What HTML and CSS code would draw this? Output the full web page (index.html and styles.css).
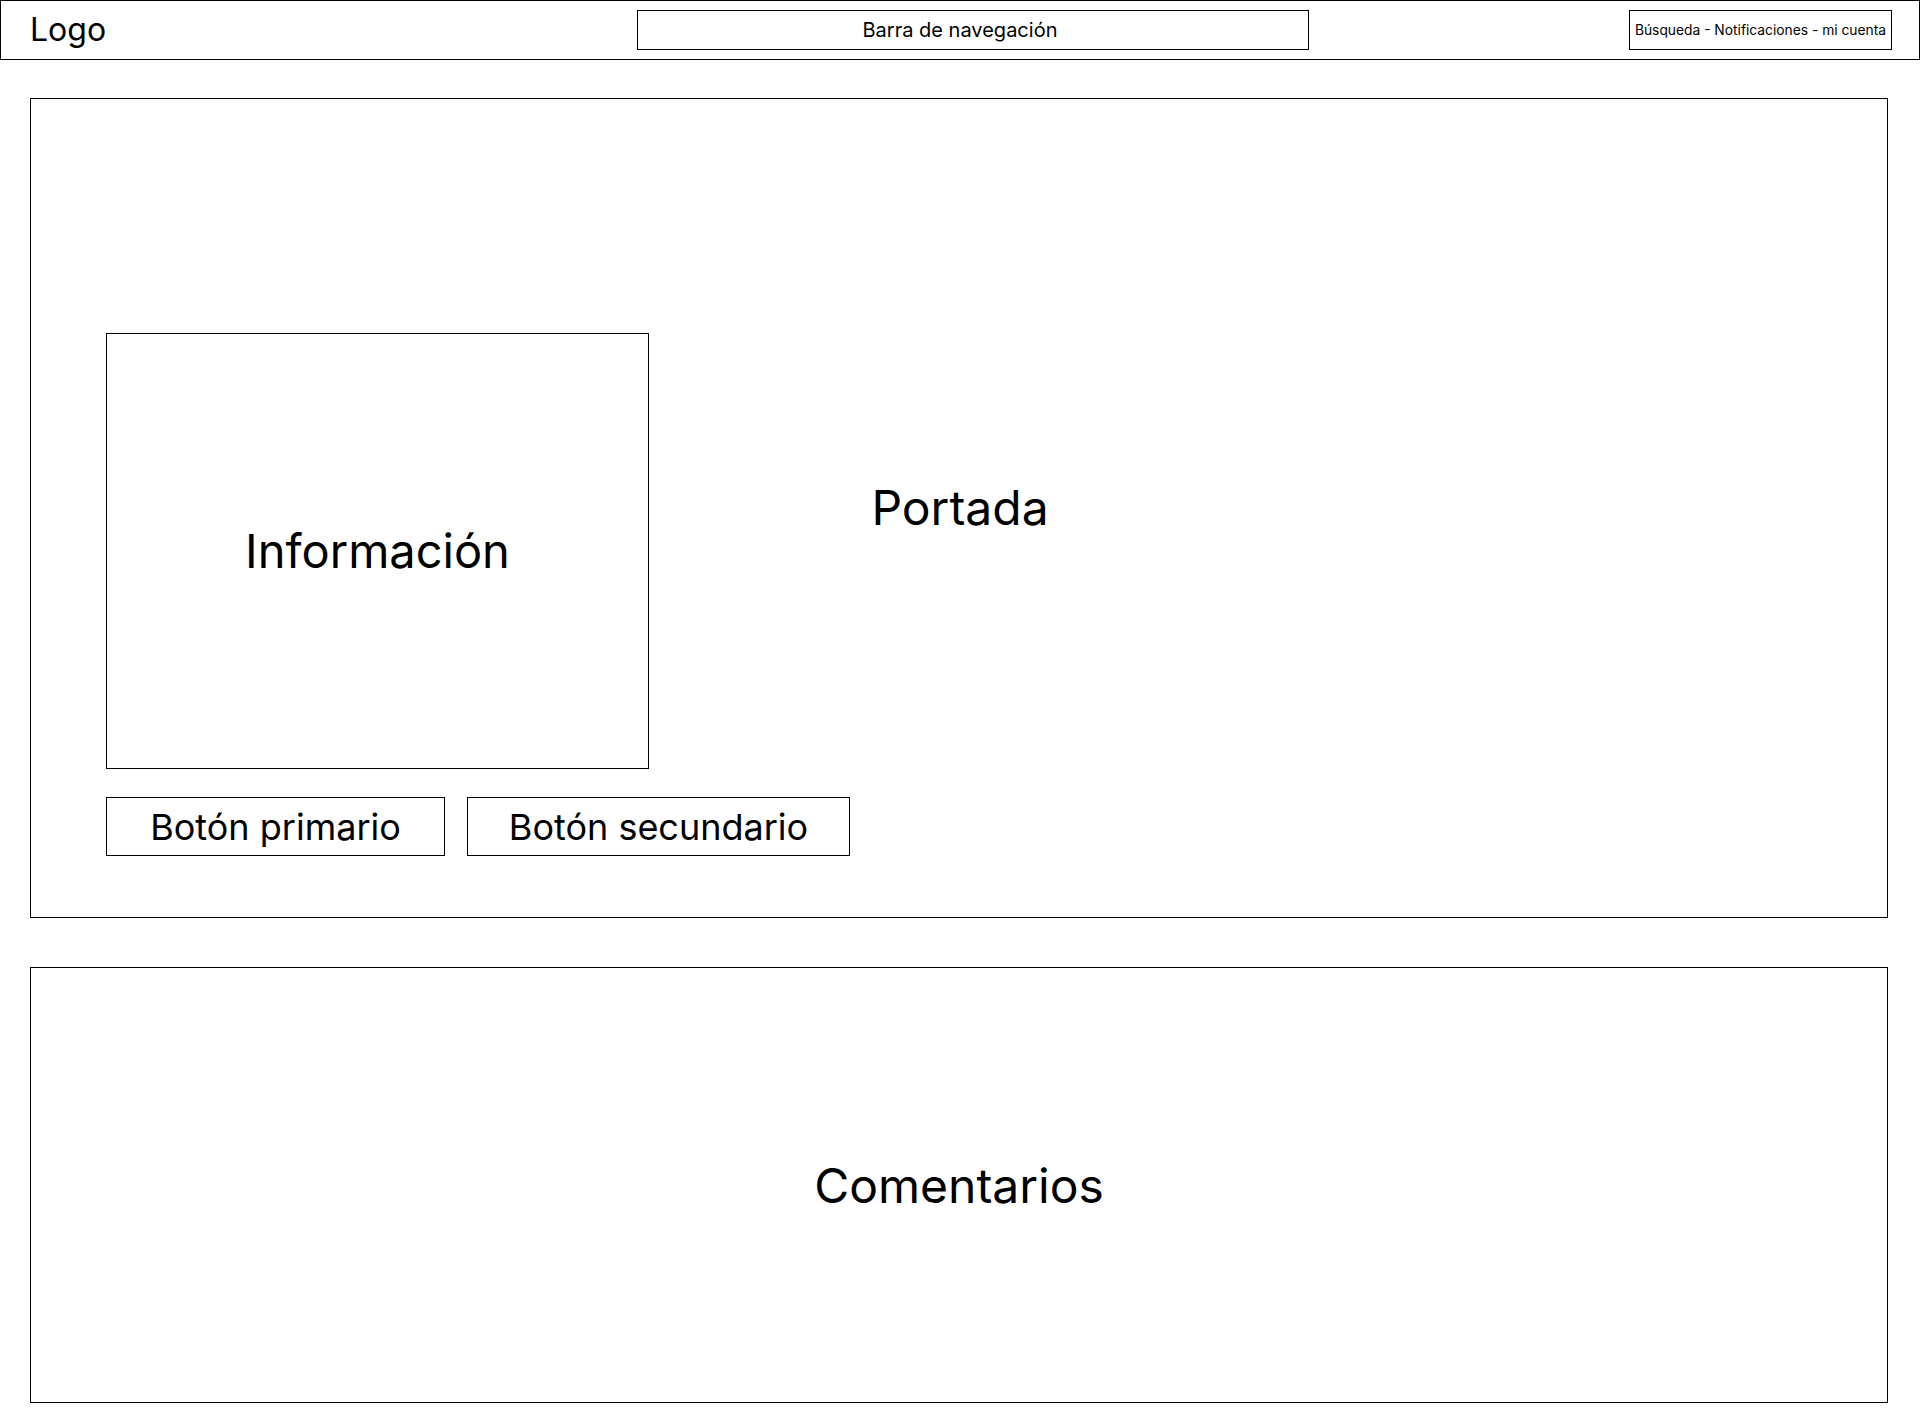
FILE: index.html
```html
<!DOCTYPE html>
<html lang="es">
<head>
<meta charset="utf-8">
<title>Wireframe</title>
<link rel="stylesheet" href="styles.css">
</head>
<body>
<header class="topbar">
  <div class="logo">Logo</div>
  <nav class="navbar"><span class="navbar-label">Barra de navegación</span></nav>
  <div class="user-tools">Búsqueda - Notificaciones - mi cuenta</div>
</header>
<main class="page">
  <section class="hero">
    <div class="hero-label">Portada</div>
    <div class="hero-content">
      <div class="info-box">Información</div>
      <div class="actions">
        <div class="btn btn-primary">Botón primario</div>
        <div class="btn btn-secondary">Botón secundario</div>
      </div>
    </div>
  </section>
  <section class="comments">Comentarios</section>
</main>
</body>
</html>
```

FILE: styles.css
```css
* {
  box-sizing: border-box;
}

html, body {
  margin: 0;
  padding: 0;
  background: #ffffff;
}

body {
  width: 1920px;
  font-family: Inter, "Noto Sans", "Liberation Sans", sans-serif;
  color: #000000;
}

.topbar {
  display: flex;
  align-items: center;
  height: 60px;
  border: 1px solid #000;
  padding: 0 27px 0 28px;
}

.logo {
  flex: 0 0 608px;
  font-size: 32px;
  line-height: 1;
  padding-left: 1px;
}

.navbar {
  flex: 0 0 672px;
  height: 40px;
  border: 1px solid #000;
  display: flex;
  align-items: center;
  justify-content: center;
  padding-right: 26px;
  font-size: 20px;
}

.user-tools {
  margin-left: auto;
  flex: 0 0 263px;
  height: 40px;
  border: 1px solid #000;
  display: flex;
  align-items: center;
  justify-content: center;
  font-size: 13.8px;
  white-space: nowrap;
}

.page {
  padding: 38px 32px 0 30px;
  display: flex;
  flex-direction: column;
  gap: 49px;
}

.hero {
  display: grid;
  width: 1858px;
  height: 820px;
  border: 1px solid #000;
}

.hero-label {
  grid-area: 1 / 1;
  place-self: center;
  font-size: 48px;
  line-height: 1;
  padding-left: 2px;
}

.hero-content {
  grid-area: 1 / 1;
  padding: 234px 0 0 75px;
  display: flex;
  flex-direction: column;
  align-items: flex-start;
  gap: 28px;
}

.info-box {
  width: 543px;
  height: 436px;
  border: 1px solid #000;
  display: flex;
  align-items: center;
  justify-content: center;
  font-size: 47px;
  padding-bottom: 2px;
}

.actions {
  display: flex;
  gap: 22px;
}

.btn {
  height: 59px;
  border: 1px solid #000;
  display: flex;
  align-items: center;
  justify-content: center;
  font-size: 36px;
}

.btn-primary {
  width: 339px;
}

.btn-secondary {
  width: 383px;
}

.comments {
  width: 1858px;
  height: 436px;
  border: 1px solid #000;
  display: flex;
  align-items: center;
  justify-content: center;
  font-size: 48px;
}
```
